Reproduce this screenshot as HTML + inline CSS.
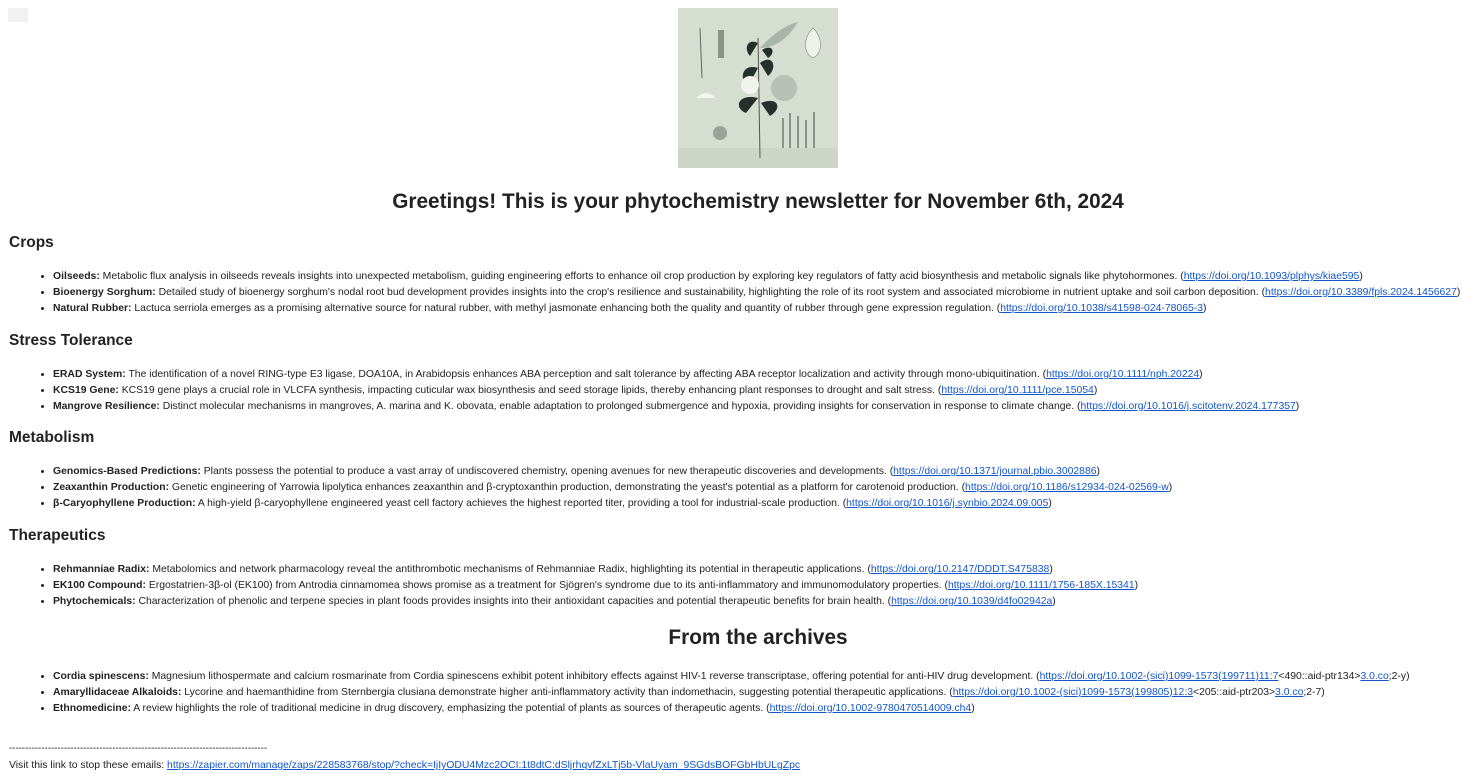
<!DOCTYPE html>
<html><head><meta charset="utf-8">
<style>
body{margin:8px;font-family:"Liberation Sans",Arial,sans-serif;color:#222;background:#fff;width:1452px}
.img{display:block;margin:0 0 0 670px;width:160px;height:160px}
h1{font-size:20.8px;text-align:center;margin:0;line-height:24px;position:absolute;left:8px;width:1500px}
h2{font-size:15.5px;margin:0;line-height:20px;position:absolute;left:9px}
h1,h2{font-weight:bold}
ul{margin:0;padding-left:53px;position:absolute;left:0;list-style:disc;line-height:16px}
li{font-size:10.4px;line-height:16px;height:16px;white-space:nowrap}
li::marker{font-size:9px}
a{color:#1155cc}
.abs{position:absolute;left:9px;font-size:10.4px;line-height:16px;white-space:nowrap}
.bx{position:absolute;left:8px;top:8px;width:20px;height:14px;background:#f1f1f1}
</style></head><body>
<div class="bx"></div>
<svg class="img" viewBox="0 0 160 160" xmlns="http://www.w3.org/2000/svg">
<rect width="160" height="160" fill="#d6ddd1"/>
<rect y="140" width="160" height="20" fill="#cdd4c8"/>
<path d="M82 150 L80 30" stroke="#555" stroke-width="1" fill="none"/>
<path d="M80 60 C65 55 60 70 70 78 Z" fill="#25302c"/>
<path d="M82 55 C95 45 100 60 90 68 Z" fill="#25302c"/>
<path d="M80 90 C60 85 55 100 68 105 Z" fill="#25302c"/>
<path d="M83 95 C100 88 105 100 92 108 Z" fill="#25302c"/>
<path d="M80 35 C70 30 65 40 72 48 Z" fill="#25302c"/>
<path d="M84 42 C95 35 98 45 90 50 Z" fill="#25302c"/>
<path d="M82 40 C100 20 115 15 120 14 C110 30 100 38 84 40 Z" fill="#a8b5a8"/>
<circle cx="72" cy="77" r="9" fill="#f2f2ee"/>
<circle cx="106" cy="80" r="13" fill="#b8c0b6"/>
<path d="M135 20 C125 30 125 45 135 50 C145 45 145 30 135 20 Z" fill="#eef0ea" stroke="#888" stroke-width=".6"/>
<path d="M18 90 Q28 80 38 90 Z" fill="#f4f4f0"/>
<rect x="40" y="22" width="6" height="28" fill="#8a928a"/>
<path d="M22 20 L24 70" stroke="#666"/>
<g stroke="#777" stroke-width="1.5"><path d="M105 140 V110 M112 140 V105 M120 140 V108 M128 140 V112 M136 140 V104"/></g>
<circle cx="42" cy="125" r="7" fill="#9aa39a"/>
</svg>
<h1 style="top:190px">Greetings! This is your phytochemistry newsletter for November 6th, 2024</h1>

<h2 style="top:233px">Crops</h2>
<ul style="top:268px">
<li><b>Oilseeds:</b> Metabolic flux analysis in oilseeds reveals insights into unexpected metabolism, guiding engineering efforts to enhance oil crop production by exploring key regulators of fatty acid biosynthesis and metabolic signals like phytohormones. (<a href="#">https://doi.org/10.1093/plphys/kiae595</a>)</li>
<li><b>Bioenergy Sorghum:</b> Detailed study of bioenergy sorghum's nodal root bud development provides insights into the crop's resilience and sustainability, highlighting the role of its root system and associated microbiome in nutrient uptake and soil carbon deposition. (<a href="#">https://doi.org/10.3389/fpls.2024.1456627</a>)</li>
<li><b>Natural Rubber:</b> Lactuca serriola emerges as a promising alternative source for natural rubber, with methyl jasmonate enhancing both the quality and quantity of rubber through gene expression regulation. (<a href="#">https://doi.org/10.1038/s41598-024-78065-3</a>)</li>
</ul>

<h2 style="top:331px">Stress Tolerance</h2>
<ul style="top:366px">
<li><b>ERAD System:</b> The identification of a novel RING-type E3 ligase, DOA10A, in Arabidopsis enhances ABA perception and salt tolerance by affecting ABA receptor localization and activity through mono-ubiquitination. (<a href="#">https://doi.org/10.1111/nph.20224</a>)</li>
<li><b>KCS19 Gene:</b> KCS19 gene plays a crucial role in VLCFA synthesis, impacting cuticular wax biosynthesis and seed storage lipids, thereby enhancing plant responses to drought and salt stress. (<a href="#">https://doi.org/10.1111/pce.15054</a>)</li>
<li><b>Mangrove Resilience:</b> Distinct molecular mechanisms in mangroves, A. marina and K. obovata, enable adaptation to prolonged submergence and hypoxia, providing insights for conservation in response to climate change. (<a href="#">https://doi.org/10.1016/j.scitotenv.2024.177357</a>)</li>
</ul>

<h2 style="top:428px">Metabolism</h2>
<ul style="top:463px">
<li><b>Genomics-Based Predictions:</b> Plants possess the potential to produce a vast array of undiscovered chemistry, opening avenues for new therapeutic discoveries and developments. (<a href="#">https://doi.org/10.1371/journal.pbio.3002886</a>)</li>
<li><b>Zeaxanthin Production:</b> Genetic engineering of Yarrowia lipolytica enhances zeaxanthin and β-cryptoxanthin production, demonstrating the yeast's potential as a platform for carotenoid production. (<a href="#">https://doi.org/10.1186/s12934-024-02569-w</a>)</li>
<li><b>β-Caryophyllene Production:</b> A high-yield β-caryophyllene engineered yeast cell factory achieves the highest reported titer, providing a tool for industrial-scale production. (<a href="#">https://doi.org/10.1016/j.synbio.2024.09.005</a>)</li>
</ul>

<h2 style="top:526px">Therapeutics</h2>
<ul style="top:561px">
<li><b>Rehmanniae Radix:</b> Metabolomics and network pharmacology reveal the antithrombotic mechanisms of Rehmanniae Radix, highlighting its potential in therapeutic applications. (<a href="#">https://doi.org/10.2147/DDDT.S475838</a>)</li>
<li><b>EK100 Compound:</b> Ergostatrien-3β-ol (EK100) from Antrodia cinnamomea shows promise as a treatment for Sjögren's syndrome due to its anti-inflammatory and immunomodulatory properties. (<a href="#">https://doi.org/10.1111/1756-185X.15341</a>)</li>
<li><b>Phytochemicals:</b> Characterization of phenolic and terpene species in plant foods provides insights into their antioxidant capacities and potential therapeutic benefits for brain health. (<a href="#">https://doi.org/10.1039/d4fo02942a</a>)</li>
</ul>

<h1 style="top:626px">From the archives</h1>
<ul style="top:668px">
<li><b>Cordia spinescens:</b> Magnesium lithospermate and calcium rosmarinate from Cordia spinescens exhibit potent inhibitory effects against HIV-1 reverse transcriptase, offering potential for anti-HIV drug development. (<a href="#">https://doi.org/10.1002-(sici)1099-1573(199711)11:7</a>&lt;490::aid-ptr134&gt;<a href="#">3.0.co</a>;2-y)</li>
<li><b>Amaryllidaceae Alkaloids:</b> Lycorine and haemanthidine from Sternbergia clusiana demonstrate higher anti-inflammatory activity than indomethacin, suggesting potential therapeutic applications. (<a href="#">https://doi.org/10.1002-(sici)1099-1573(199805)12:3</a>&lt;205::aid-ptr203&gt;<a href="#">3.0.co</a>;2-7)</li>
<li><b>Ethnomedicine:</b> A review highlights the role of traditional medicine in drug discovery, emphasizing the potential of plants as sources of therapeutic agents. (<a href="#">https://doi.org/10.1002-9780470514009.ch4</a>)</li>
</ul>

<div class="abs" style="top:741px;font-size:9.7px">--------------------------------------------------------------------------------</div>
<div class="abs" style="top:758px">Visit this link to stop these emails: <a href="#">https://zapier.com/manage/zaps/228583768/stop/?check=IjIyODU4Mzc2OCI:1t8dtC:dSljrhqvfZxLTj5b-VlaUyam_9SGdsBOFGbHbULgZpc</a></div>
</body></html>
